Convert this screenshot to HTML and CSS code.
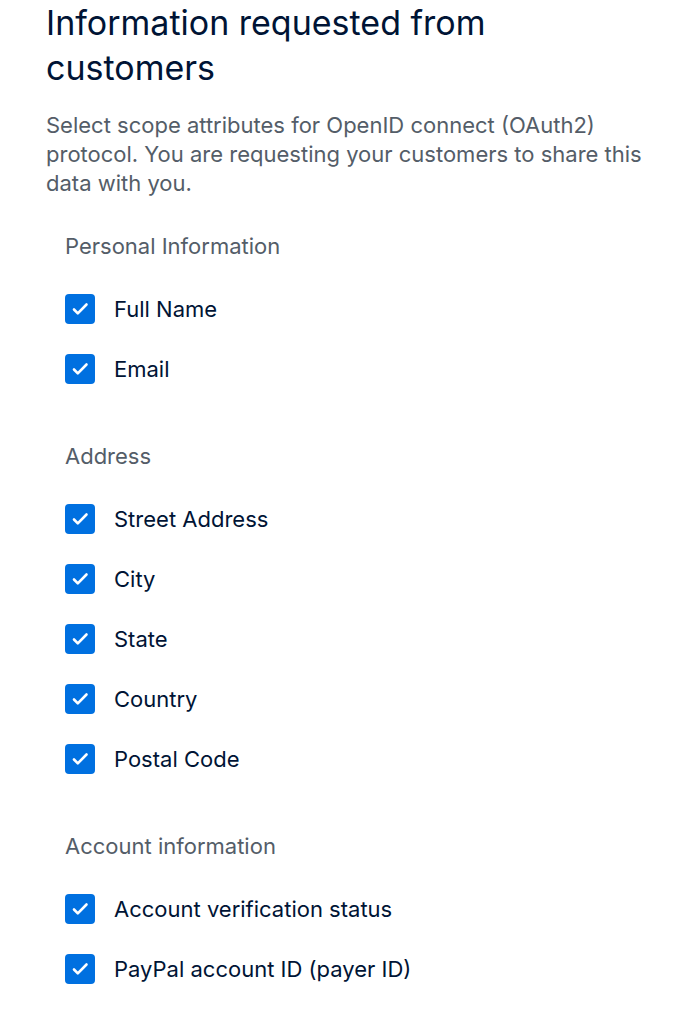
FILE: index.html
```html
<!DOCTYPE html>
<html lang="en">
<head>
<meta charset="utf-8">
<title>Information requested from customers</title>
<link rel="stylesheet" href="styles.css">
</head>
<body>
<main class="page">
  <h1 class="title">Information requested from customers</h1>
  <p class="desc">Select scope attributes for OpenID connect (OAuth2) protocol. You are requesting your customers to share this data with you.</p>

  <section class="group">
    <h2 class="group-title">Personal Information</h2>
    <ul class="items">
      <li class="item"><span class="box"><svg viewBox="0 0 30 30"><path d="M9 15.5l3.8 3.8L21.5 10.5"/></svg></span><span class="label">Full Name</span></li>
      <li class="item"><span class="box"><svg viewBox="0 0 30 30"><path d="M9 15.5l3.8 3.8L21.5 10.5"/></svg></span><span class="label">Email</span></li>
    </ul>
  </section>

  <section class="group">
    <h2 class="group-title">Address</h2>
    <ul class="items">
      <li class="item"><span class="box"><svg viewBox="0 0 30 30"><path d="M9 15.5l3.8 3.8L21.5 10.5"/></svg></span><span class="label">Street Address</span></li>
      <li class="item"><span class="box"><svg viewBox="0 0 30 30"><path d="M9 15.5l3.8 3.8L21.5 10.5"/></svg></span><span class="label">City</span></li>
      <li class="item"><span class="box"><svg viewBox="0 0 30 30"><path d="M9 15.5l3.8 3.8L21.5 10.5"/></svg></span><span class="label">State</span></li>
      <li class="item"><span class="box"><svg viewBox="0 0 30 30"><path d="M9 15.5l3.8 3.8L21.5 10.5"/></svg></span><span class="label">Country</span></li>
      <li class="item"><span class="box"><svg viewBox="0 0 30 30"><path d="M9 15.5l3.8 3.8L21.5 10.5"/></svg></span><span class="label">Postal Code</span></li>
    </ul>
  </section>

  <section class="group">
    <h2 class="group-title">Account information</h2>
    <ul class="items">
      <li class="item"><span class="box"><svg viewBox="0 0 30 30"><path d="M9 15.5l3.8 3.8L21.5 10.5"/></svg></span><span class="label">Account verification status</span></li>
      <li class="item"><span class="box"><svg viewBox="0 0 30 30"><path d="M9 15.5l3.8 3.8L21.5 10.5"/></svg></span><span class="label">PayPal account ID (payer ID)</span></li>
    </ul>
  </section>
</main>
</body>
</html>
```

FILE: styles.css
```css
html, body {
  margin: 0;
  padding: 0;
  background: #ffffff;
}

body {
  font-family: Inter, "Noto Sans", sans-serif;
  color: #001435;
}

.page {
  padding: 0 40px 0 46px;
}

.title {
  margin: 0;
  max-width: 540px;
  font-size: 34px;
  line-height: 45px;
  font-weight: 400;
  color: #001435;
}

.desc {
  margin: 21px 0 0;
  max-width: 614px;
  font-size: 22px;
  line-height: 29px;
  color: #545d68;
}

.group {
  padding-left: 19px;
  margin-top: 34px;
}

.group + .group {
  margin-top: 58px;
}

.group-title {
  margin: 0;
  font-size: 22px;
  line-height: 29px;
  font-weight: 400;
  color: #545d68;
}

.items {
  list-style: none;
  margin: 33px 0 0;
  padding: 0;
  display: flex;
  flex-direction: column;
  gap: 30px;
}

.item {
  display: flex;
  align-items: center;
  gap: 19px;
  height: 30px;
}

.box {
  width: 30px;
  height: 30px;
  border-radius: 4px;
  background: #0070e0;
  display: flex;
  flex: none;
}

.box svg {
  width: 30px;
  height: 30px;
}

.box path {
  fill: none;
  stroke: #ffffff;
  stroke-width: 2.6;
  stroke-linecap: round;
  stroke-linejoin: round;
}

.label {
  font-size: 22px;
  line-height: 30px;
  color: #001435;
}
```
